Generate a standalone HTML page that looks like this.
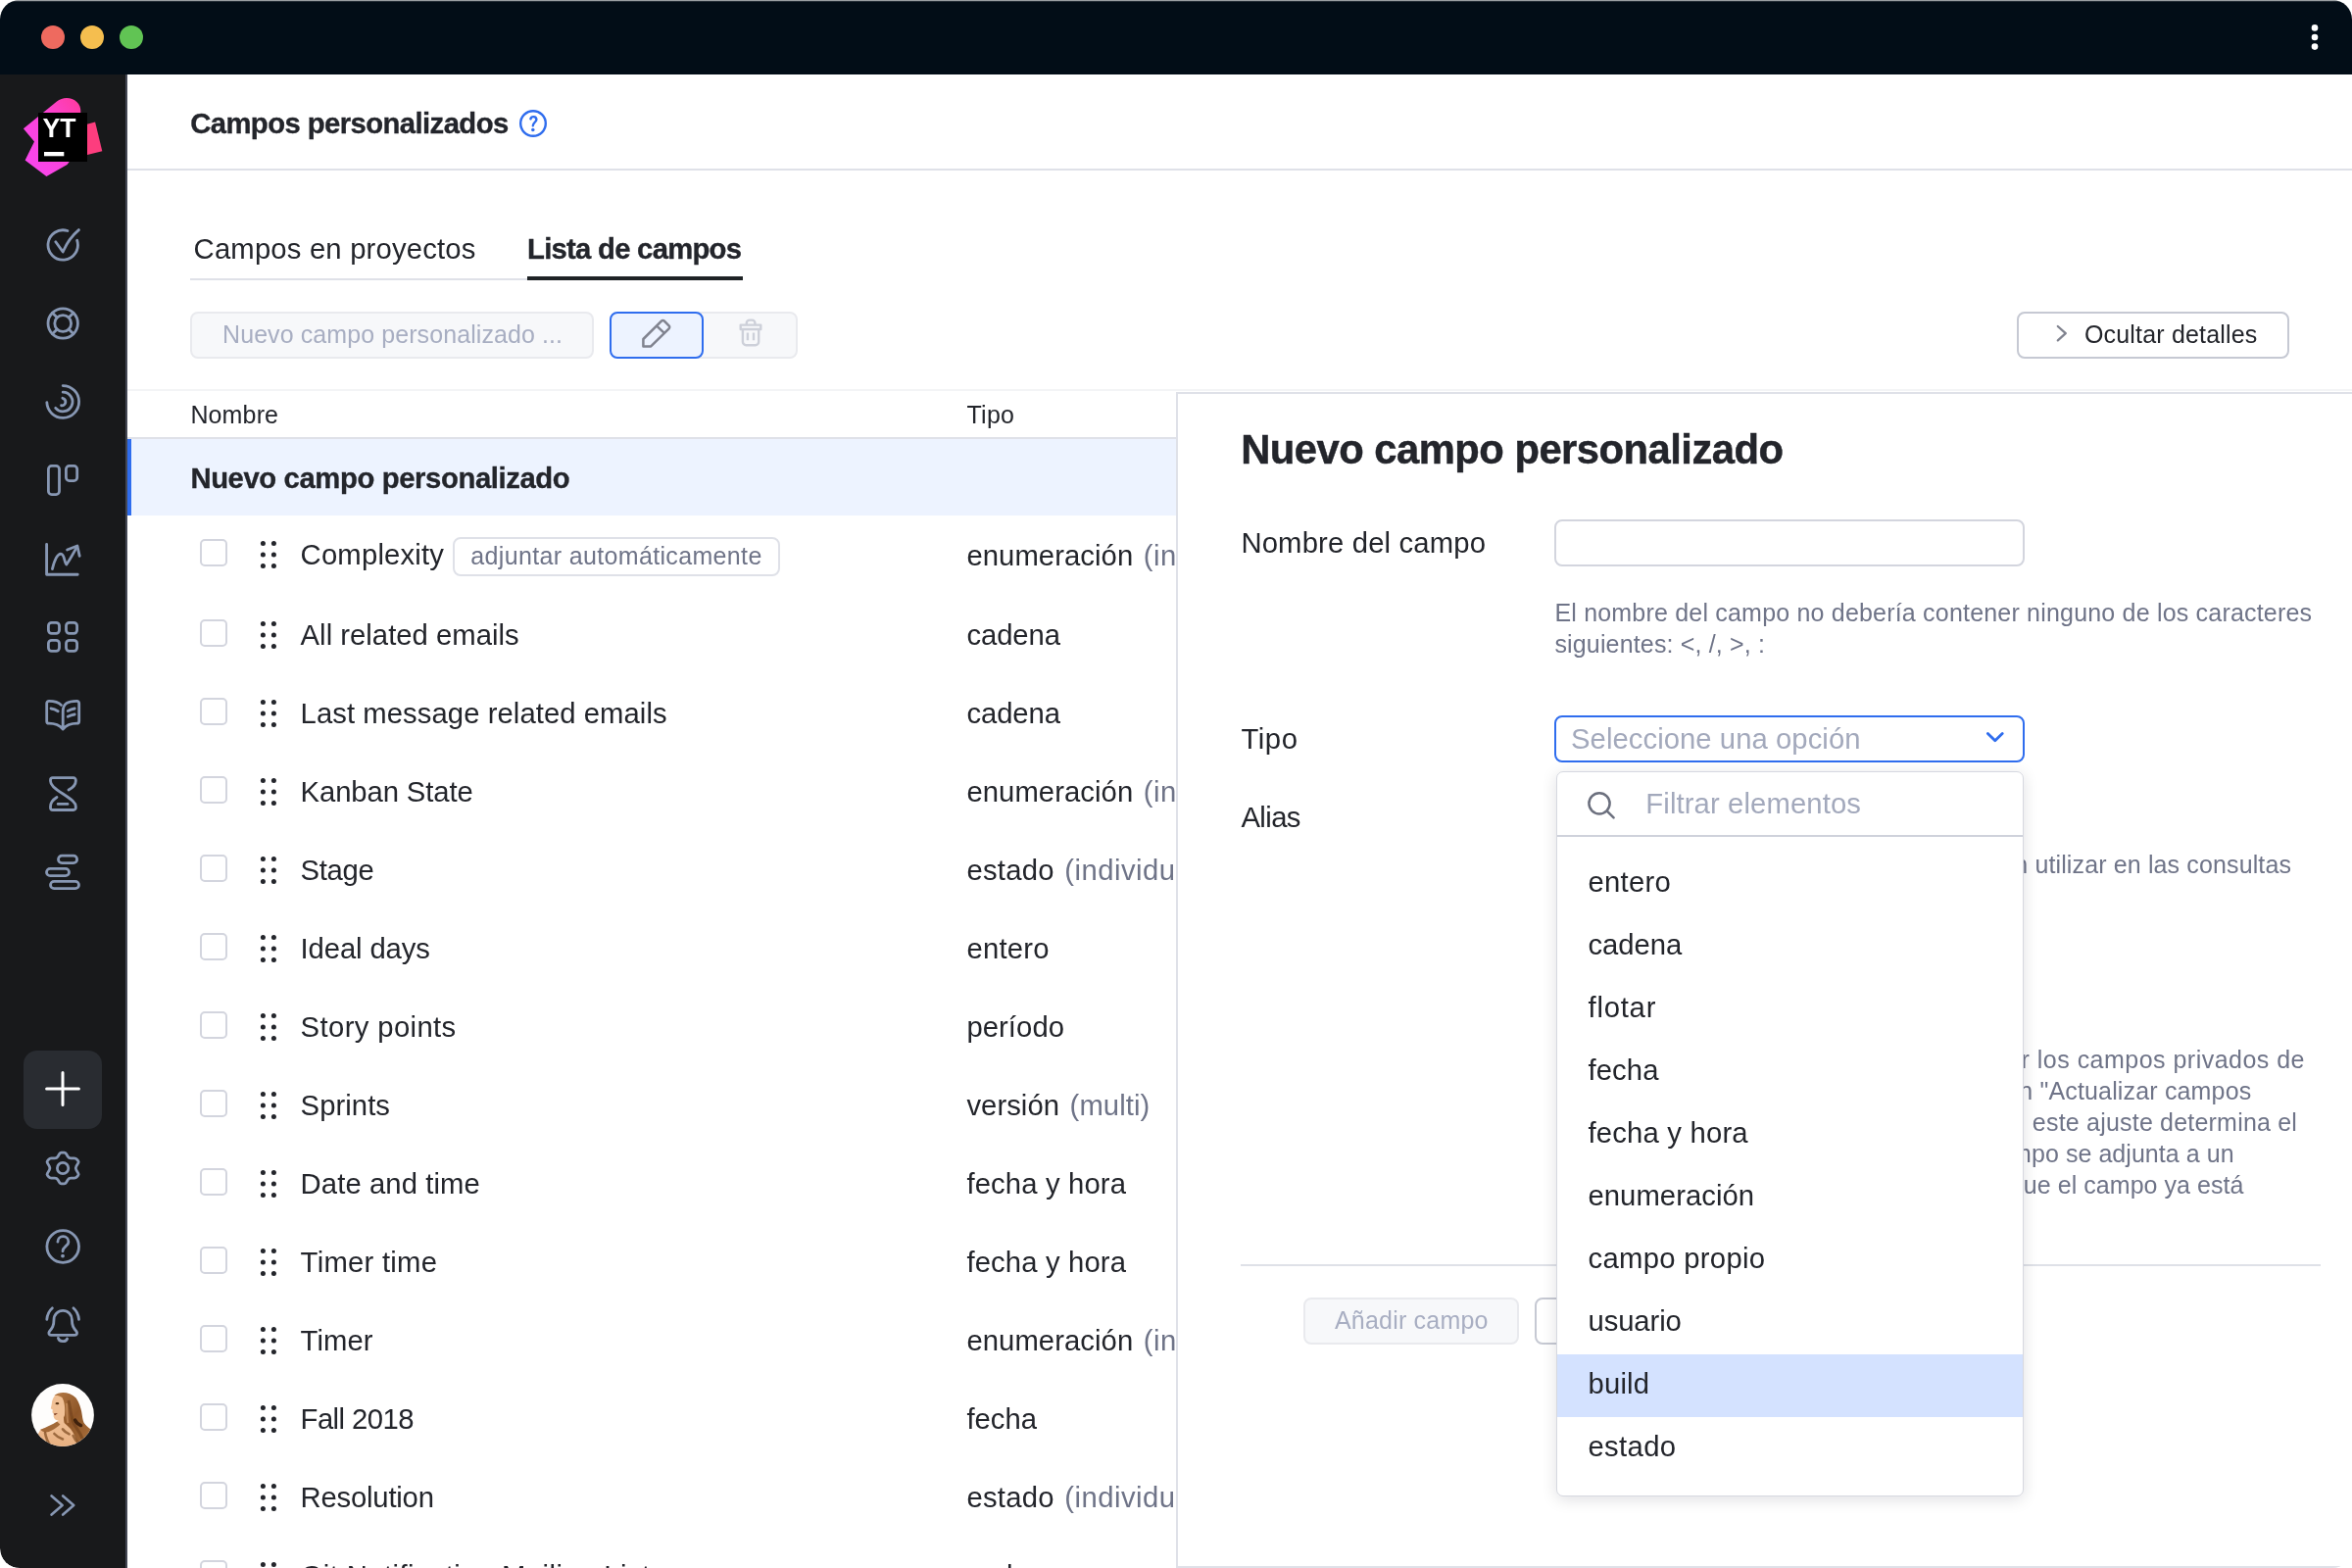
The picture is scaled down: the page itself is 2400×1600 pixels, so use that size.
<!DOCTYPE html>
<html lang="es"><head><meta charset="utf-8"><title>Campos personalizados</title>
<style>
*{box-sizing:border-box;margin:0;padding:0}
html,body{width:2400px;height:1600px;overflow:hidden;background:#fff}
body{font-family:"Liberation Sans",Arial,sans-serif;color:#23252b;position:relative}
.win{position:absolute;left:0;top:0;width:2400px;height:1600px;border-radius:20px;overflow:hidden;background:#fff;will-change:transform}
.abs,.t,.ic,.cb,.hl{position:absolute}
.t{white-space:nowrap}
.b{font-weight:700;-webkit-text-stroke:.011em currentColor}
.titlebar{left:0;top:0;width:2400px;height:76px;background:#020d17;background-image:linear-gradient(rgba(255,255,255,.6) 0,rgba(255,255,255,.6) 1px,rgba(255,255,255,.14) 1px,rgba(255,255,255,.14) 2px,rgba(255,255,255,0) 2px);background-repeat:no-repeat}
.tl{width:24px;height:24px;border-radius:50%;top:26px}
.side{left:0;top:76px;width:130px;height:1524px;background:#18191b;border-right:2px solid #444854;border-bottom-left-radius:20px}
.plus{left:24px;top:1072px;width:80px;height:80px;border-radius:14px;background:#292c31}
.hline{height:2px;background:#dfe1e8}
.cb{left:204px;width:28px;height:28px;border:2px solid #d3d5de;border-radius:5px;background:#fff}
.btn{border-radius:8px;border:2px solid #c6c9d3;background:#fff}
.dis{background:#f7f8fa;border-color:#e9eaee}
.panel{left:1200px;top:400px;width:1200px;height:1200px;background:#fff;border:2px solid #dfe1e8;border-right:0}
.clip{left:130px;top:400px;width:1070px;height:1200px;overflow:hidden}
.pop{left:1588px;top:787px;width:477px;height:740px;background:#fff;border-radius:7px;border:1px solid #d6d8e0;box-shadow:0 3px 16px rgba(0,0,30,.13);overflow:hidden}
.hl{left:0;width:476px;height:64px;background:#d4e2ff}
</style></head><body>
<div class="win">
<!-- main content -->
<main>
<div class="t b" style="left:194.2px;top:108.00px;font-size:29.25px;line-height:36px;letter-spacing:-0.572px;">Campos personalizados</div><svg class="ic" style="left:529px;top:111px" width="30" height="30" viewBox="0 0 30 30" fill="none" stroke="#2f6dee" stroke-width="2.4" stroke-linecap="round" stroke-linejoin="round"><circle cx="15" cy="15" r="12.8"/><path d="M12.4 10.4 A3.05 3.05 0 0 1 18.4 10.9 C18.4 13.5 14.8 14.1 14.8 17.3"/><circle cx="14.8" cy="21.5" r="1.75" fill="#2f6dee" stroke="none"/></svg><div class="abs hline" style="left:130px;top:172px;width:2270px"></div><div class="t" style="left:197.6px;top:236.00px;font-size:29.25px;line-height:36px;letter-spacing:0.183px;">Campos en proyectos</div><div class="t b" style="left:538.0px;top:236.00px;font-size:29.25px;line-height:36px;letter-spacing:-0.728px;">Lista de campos</div><div class="abs hline" style="left:194px;top:283.5px;width:344px"></div><div class="abs" style="left:538px;top:282px;width:220px;height:4px;background:#1f2326"></div><div class="abs btn dis" style="left:194px;top:318px;width:412px;height:48px"></div><div class="t" style="left:227.0px;top:325.00px;font-size:25px;line-height:32px;letter-spacing:0.085px;color:#a8aec2;">Nuevo campo personalizado ...</div><div class="abs btn dis" style="left:700px;top:318px;width:114px;height:48px"></div><div class="abs btn" style="left:622px;top:318px;width:96px;height:48px;border-color:#2f6dee;background:#edf3ff"></div><svg class="ic" style="left:650px;top:322px" width="40" height="40" viewBox="650 322 40 40" fill="none" stroke="#80838f" stroke-width="2.5" stroke-linejoin="round" stroke-linecap="round"><path d="M656.4 346 L674.9 327.6 A2.1 2.1 0 0 1 677.9 327.6 L682.6 332.3 A2.1 2.1 0 0 1 682.6 335.3 L664.2 353.4 H656.4 Z"/><path d="M671.2 333.6 L677.6 339.6"/></svg><svg class="ic" style="left:750px;top:322px" width="34" height="36" viewBox="750 322 34 36" fill="none" stroke="#cdd0d9" stroke-width="2.4" stroke-linejoin="round"><path d="M755.7 331.6 H776.3 V336 H755.7 Z"/><path d="M761.8 331.4 V329.6 A3 3 0 0 1 764.8 326.6 H767.4 A3 3 0 0 1 770.4 329.6 V331.4"/><path d="M757.9 336.2 V348.8 A3.4 3.4 0 0 0 761.3 352.2 H770.8 A3.4 3.4 0 0 0 774.2 348.8 V336.2"/><path d="M762.9 339.4 V347.2 M769 339.4 V347.2"/></svg><div class="abs btn" style="left:2058px;top:318px;width:278px;height:48px"></div><svg class="ic" style="left:2094px;top:328px" width="20" height="24" viewBox="2094 328 20 24" fill="none" stroke="#80838f" stroke-width="2.3" stroke-linecap="round" stroke-linejoin="round"><path d="M2099.8 333 L2107.8 340.2 L2099.8 347.4"/></svg><div class="t" style="left:2127.0px;top:325.00px;font-size:25px;line-height:32px;letter-spacing:0.174px;">Ocultar detalles</div><div class="abs" style="left:130px;top:397px;width:2270px;height:2px;background:#f3f4f6"></div><div class="t" style="left:194.4px;top:407.00px;font-size:25px;line-height:32px;letter-spacing:0.138px;">Nombre</div><div class="t" style="left:986.4px;top:407.00px;font-size:25px;line-height:32px;letter-spacing:0.299px;">Tipo</div><div class="abs hline" style="left:130px;top:445.5px;width:1070px"></div><div class="abs" style="left:130px;top:448px;width:1070px;height:78px;background:#edf3ff"></div><div class="abs" style="left:130px;top:448px;width:4px;height:78px;background:#2f6dee"></div><div class="t b" style="left:194.4px;top:470.00px;font-size:29.25px;line-height:36px;letter-spacing:-0.386px;">Nuevo campo personalizado</div><div class="abs" style="left:462px;top:548px;width:334px;height:40px;border:2px solid #dfe1e8;border-radius:8px"></div><div class="t" style="left:480.3px;top:551.00px;font-size:25px;line-height:32px;letter-spacing:0.346px;color:#6f7488;">adjuntar automáticamente</div><div class="abs clip" style="left:0;top:0;width:1200px;height:1600px"><div class="cb" style="top:550px"></div><svg class="ic" style="left:264px;top:549.7px" width="20" height="32" viewBox="0 0 20 32" fill="#23252b"><circle cx="4.4" cy="4.5" r="2.5"/><circle cx="15.4" cy="4.5" r="2.5"/><circle cx="4.4" cy="16" r="2.5"/><circle cx="15.4" cy="16" r="2.5"/><circle cx="4.4" cy="27.5" r="2.5"/><circle cx="15.4" cy="27.5" r="2.5"/></svg><div class="t" style="left:306.6px;top:548.00px;font-size:29.25px;line-height:36px;letter-spacing:0.193px;">Complexity</div><div class="t" style="left:986.4px;top:549.00px;font-size:29.25px;line-height:36px;letter-spacing:0.071px;">enumeración</div><div class="t" style="left:1166.8px;top:549.00px;font-size:29.25px;line-height:36px;letter-spacing:0.498px;color:#6f7488;">(individual)</div><div class="cb" style="top:632px"></div><svg class="ic" style="left:264px;top:631.7px" width="20" height="32" viewBox="0 0 20 32" fill="#23252b"><circle cx="4.4" cy="4.5" r="2.5"/><circle cx="15.4" cy="4.5" r="2.5"/><circle cx="4.4" cy="16" r="2.5"/><circle cx="15.4" cy="16" r="2.5"/><circle cx="4.4" cy="27.5" r="2.5"/><circle cx="15.4" cy="27.5" r="2.5"/></svg><div class="t" style="left:306.6px;top:630.00px;font-size:29.25px;line-height:36px;letter-spacing:0.017px;">All related emails</div><div class="t" style="left:986.4px;top:630.00px;font-size:29.25px;line-height:36px;letter-spacing:-0.071px;">cadena</div><div class="cb" style="top:712px"></div><svg class="ic" style="left:264px;top:711.7px" width="20" height="32" viewBox="0 0 20 32" fill="#23252b"><circle cx="4.4" cy="4.5" r="2.5"/><circle cx="15.4" cy="4.5" r="2.5"/><circle cx="4.4" cy="16" r="2.5"/><circle cx="15.4" cy="16" r="2.5"/><circle cx="4.4" cy="27.5" r="2.5"/><circle cx="15.4" cy="27.5" r="2.5"/></svg><div class="t" style="left:306.6px;top:710.00px;font-size:29.25px;line-height:36px;letter-spacing:0.066px;">Last message related emails</div><div class="t" style="left:986.4px;top:710.00px;font-size:29.25px;line-height:36px;letter-spacing:-0.071px;">cadena</div><div class="cb" style="top:792px"></div><svg class="ic" style="left:264px;top:791.7px" width="20" height="32" viewBox="0 0 20 32" fill="#23252b"><circle cx="4.4" cy="4.5" r="2.5"/><circle cx="15.4" cy="4.5" r="2.5"/><circle cx="4.4" cy="16" r="2.5"/><circle cx="15.4" cy="16" r="2.5"/><circle cx="4.4" cy="27.5" r="2.5"/><circle cx="15.4" cy="27.5" r="2.5"/></svg><div class="t" style="left:306.6px;top:790.00px;font-size:29.25px;line-height:36px;letter-spacing:-0.105px;">Kanban State</div><div class="t" style="left:986.4px;top:790.00px;font-size:29.25px;line-height:36px;letter-spacing:0.071px;">enumeración</div><div class="t" style="left:1166.8px;top:790.00px;font-size:29.25px;line-height:36px;letter-spacing:0.498px;color:#6f7488;">(individual)</div><div class="cb" style="top:872px"></div><svg class="ic" style="left:264px;top:871.7px" width="20" height="32" viewBox="0 0 20 32" fill="#23252b"><circle cx="4.4" cy="4.5" r="2.5"/><circle cx="15.4" cy="4.5" r="2.5"/><circle cx="4.4" cy="16" r="2.5"/><circle cx="15.4" cy="16" r="2.5"/><circle cx="4.4" cy="27.5" r="2.5"/><circle cx="15.4" cy="27.5" r="2.5"/></svg><div class="t" style="left:306.6px;top:870.00px;font-size:29.25px;line-height:36px;letter-spacing:-0.332px;">Stage</div><div class="t" style="left:986.4px;top:870.00px;font-size:29.25px;line-height:36px;letter-spacing:0.277px;">estado</div><div class="t" style="left:1086.2px;top:870.00px;font-size:29.25px;line-height:36px;letter-spacing:0.498px;color:#6f7488;">(individual)</div><div class="cb" style="top:952px"></div><svg class="ic" style="left:264px;top:951.7px" width="20" height="32" viewBox="0 0 20 32" fill="#23252b"><circle cx="4.4" cy="4.5" r="2.5"/><circle cx="15.4" cy="4.5" r="2.5"/><circle cx="4.4" cy="16" r="2.5"/><circle cx="15.4" cy="16" r="2.5"/><circle cx="4.4" cy="27.5" r="2.5"/><circle cx="15.4" cy="27.5" r="2.5"/></svg><div class="t" style="left:306.6px;top:950.00px;font-size:29.25px;line-height:36px;letter-spacing:-0.125px;">Ideal days</div><div class="t" style="left:986.4px;top:950.00px;font-size:29.25px;line-height:36px;letter-spacing:0.254px;">entero</div><div class="cb" style="top:1032px"></div><svg class="ic" style="left:264px;top:1031.7px" width="20" height="32" viewBox="0 0 20 32" fill="#23252b"><circle cx="4.4" cy="4.5" r="2.5"/><circle cx="15.4" cy="4.5" r="2.5"/><circle cx="4.4" cy="16" r="2.5"/><circle cx="15.4" cy="16" r="2.5"/><circle cx="4.4" cy="27.5" r="2.5"/><circle cx="15.4" cy="27.5" r="2.5"/></svg><div class="t" style="left:306.6px;top:1030.00px;font-size:29.25px;line-height:36px;letter-spacing:0.378px;">Story points</div><div class="t" style="left:986.4px;top:1030.00px;font-size:29.25px;line-height:36px;letter-spacing:0.067px;">período</div><div class="cb" style="top:1112px"></div><svg class="ic" style="left:264px;top:1111.7px" width="20" height="32" viewBox="0 0 20 32" fill="#23252b"><circle cx="4.4" cy="4.5" r="2.5"/><circle cx="15.4" cy="4.5" r="2.5"/><circle cx="4.4" cy="16" r="2.5"/><circle cx="15.4" cy="16" r="2.5"/><circle cx="4.4" cy="27.5" r="2.5"/><circle cx="15.4" cy="27.5" r="2.5"/></svg><div class="t" style="left:306.6px;top:1110.00px;font-size:29.25px;line-height:36px;letter-spacing:0.061px;">Sprints</div><div class="t" style="left:986.4px;top:1110.00px;font-size:29.25px;line-height:36px;letter-spacing:0.052px;">versión</div><div class="t" style="left:1091.6px;top:1110.00px;font-size:29.25px;line-height:36px;letter-spacing:0.060px;color:#6f7488;">(multi)</div><div class="cb" style="top:1192px"></div><svg class="ic" style="left:264px;top:1191.7px" width="20" height="32" viewBox="0 0 20 32" fill="#23252b"><circle cx="4.4" cy="4.5" r="2.5"/><circle cx="15.4" cy="4.5" r="2.5"/><circle cx="4.4" cy="16" r="2.5"/><circle cx="15.4" cy="16" r="2.5"/><circle cx="4.4" cy="27.5" r="2.5"/><circle cx="15.4" cy="27.5" r="2.5"/></svg><div class="t" style="left:306.6px;top:1190.00px;font-size:29.25px;line-height:36px;letter-spacing:0.093px;">Date and time</div><div class="t" style="left:986.4px;top:1190.00px;font-size:29.25px;line-height:36px;letter-spacing:0.149px;">fecha y hora</div><div class="cb" style="top:1272px"></div><svg class="ic" style="left:264px;top:1271.7px" width="20" height="32" viewBox="0 0 20 32" fill="#23252b"><circle cx="4.4" cy="4.5" r="2.5"/><circle cx="15.4" cy="4.5" r="2.5"/><circle cx="4.4" cy="16" r="2.5"/><circle cx="15.4" cy="16" r="2.5"/><circle cx="4.4" cy="27.5" r="2.5"/><circle cx="15.4" cy="27.5" r="2.5"/></svg><div class="t" style="left:306.6px;top:1270.00px;font-size:29.25px;line-height:36px;letter-spacing:0.262px;">Timer time</div><div class="t" style="left:986.4px;top:1270.00px;font-size:29.25px;line-height:36px;letter-spacing:0.149px;">fecha y hora</div><div class="cb" style="top:1352px"></div><svg class="ic" style="left:264px;top:1351.7px" width="20" height="32" viewBox="0 0 20 32" fill="#23252b"><circle cx="4.4" cy="4.5" r="2.5"/><circle cx="15.4" cy="4.5" r="2.5"/><circle cx="4.4" cy="16" r="2.5"/><circle cx="15.4" cy="16" r="2.5"/><circle cx="4.4" cy="27.5" r="2.5"/><circle cx="15.4" cy="27.5" r="2.5"/></svg><div class="t" style="left:306.6px;top:1350.00px;font-size:29.25px;line-height:36px;letter-spacing:0.086px;">Timer</div><div class="t" style="left:986.4px;top:1350.00px;font-size:29.25px;line-height:36px;letter-spacing:0.071px;">enumeración</div><div class="t" style="left:1166.8px;top:1350.00px;font-size:29.25px;line-height:36px;letter-spacing:0.498px;color:#6f7488;">(individual)</div><div class="cb" style="top:1432px"></div><svg class="ic" style="left:264px;top:1431.7px" width="20" height="32" viewBox="0 0 20 32" fill="#23252b"><circle cx="4.4" cy="4.5" r="2.5"/><circle cx="15.4" cy="4.5" r="2.5"/><circle cx="4.4" cy="16" r="2.5"/><circle cx="15.4" cy="16" r="2.5"/><circle cx="4.4" cy="27.5" r="2.5"/><circle cx="15.4" cy="27.5" r="2.5"/></svg><div class="t" style="left:306.6px;top:1430.00px;font-size:29.25px;line-height:36px;letter-spacing:-0.565px;">Fall 2018</div><div class="t" style="left:986.4px;top:1430.00px;font-size:29.25px;line-height:36px;letter-spacing:0.013px;">fecha</div><div class="cb" style="top:1512px"></div><svg class="ic" style="left:264px;top:1511.7px" width="20" height="32" viewBox="0 0 20 32" fill="#23252b"><circle cx="4.4" cy="4.5" r="2.5"/><circle cx="15.4" cy="4.5" r="2.5"/><circle cx="4.4" cy="16" r="2.5"/><circle cx="15.4" cy="16" r="2.5"/><circle cx="4.4" cy="27.5" r="2.5"/><circle cx="15.4" cy="27.5" r="2.5"/></svg><div class="t" style="left:306.6px;top:1510.00px;font-size:29.25px;line-height:36px;letter-spacing:-0.211px;">Resolution</div><div class="t" style="left:986.4px;top:1510.00px;font-size:29.25px;line-height:36px;letter-spacing:0.277px;">estado</div><div class="t" style="left:1086.2px;top:1510.00px;font-size:29.25px;line-height:36px;letter-spacing:0.498px;color:#6f7488;">(individual)</div><div class="cb" style="top:1592px"></div><svg class="ic" style="left:264px;top:1591.7px" width="20" height="32" viewBox="0 0 20 32" fill="#23252b"><circle cx="4.4" cy="4.5" r="2.5"/><circle cx="15.4" cy="4.5" r="2.5"/><circle cx="4.4" cy="16" r="2.5"/><circle cx="15.4" cy="16" r="2.5"/><circle cx="4.4" cy="27.5" r="2.5"/><circle cx="15.4" cy="27.5" r="2.5"/></svg><div class="t" style="left:306.6px;top:1590.00px;font-size:29.25px;line-height:36px;letter-spacing:0.421px;">Git Notification Mailing List</div><div class="t" style="left:986.4px;top:1590.00px;font-size:29.25px;line-height:36px;letter-spacing:-0.071px;">cadena</div></div><section><div class="abs panel"></div><div class="t b" style="left:1266.2px;top:433.00px;font-size:41.75px;line-height:51px;letter-spacing:-0.511px;">Nuevo campo personalizado</div><div class="t" style="left:1266.4px;top:536.00px;font-size:29.25px;line-height:36px;letter-spacing:0.167px;">Nombre del campo</div><div class="abs btn" style="left:1586px;top:530px;width:480px;height:48px;border-color:#d3d5de"></div><div class="t" style="left:1586.4px;top:609.00px;font-size:25px;line-height:32px;letter-spacing:0.195px;color:#6f7488;">El nombre del campo no debería contener ninguno de los caracteres</div><div class="t" style="left:1586.4px;top:641.00px;font-size:25px;line-height:32px;letter-spacing:0.161px;color:#6f7488;">siguientes: &lt;, /, &gt;, :</div><div class="t" style="left:1266.4px;top:736.00px;font-size:29.25px;line-height:36px;letter-spacing:0.596px;">Tipo</div><div class="abs btn" style="left:1586px;top:730px;width:480px;height:48px;border-color:#2f6dee"></div><div class="t" style="left:1603.0px;top:736.00px;font-size:29.25px;line-height:36px;letter-spacing:0.059px;color:#a3a9bc;">Seleccione una opción</div><svg class="ic" style="left:2022px;top:742px" width="28" height="20" viewBox="2022 742 28 20" fill="none" stroke="#2f6dee" stroke-width="2.8" stroke-linecap="round" stroke-linejoin="round"><path d="M2028.4 748.4 L2035.8 755.8 L2043.2 748.4"/></svg><div class="t" style="left:1266.4px;top:816.00px;font-size:29.25px;line-height:36px;letter-spacing:-0.575px;">Alias</div><div class="t" style="right:61.9px;top:866.00px;font-size:25px;line-height:32px;letter-spacing:0.130px;color:#6f7488;">Lista de alias que se pueden utilizar en las consultas</div><div class="t" style="right:48.0px;top:1065.00px;font-size:25px;line-height:32px;letter-spacing:0.480px;color:#6f7488;">Solo los usuarios que pueden leer los campos privados de</div><div class="t" style="right:102.6px;top:1097.00px;font-size:25px;line-height:32px;letter-spacing:0.160px;color:#6f7488;">incidencias pueden ver el campo en "Actualizar campos</div><div class="t" style="right:55.9px;top:1129.00px;font-size:25px;line-height:32px;letter-spacing:0.200px;color:#6f7488;">privados de incidencias". Además, este ajuste determina el</div><div class="t" style="right:120.4px;top:1161.00px;font-size:25px;line-height:32px;letter-spacing:0.050px;color:#6f7488;">comportamiento cuando el campo se adjunta a un</div><div class="t" style="right:110.5px;top:1193.00px;font-size:25px;line-height:32px;letter-spacing:0.050px;color:#6f7488;">proyecto. Tenga en cuenta que el campo ya está</div><div class="abs hline" style="left:1266px;top:1289.8px;width:1102px"></div><div class="abs btn dis" style="left:1330.4px;top:1324.2px;width:219.2px;height:47.4px"></div><div class="t" style="left:1362.0px;top:1331.00px;font-size:25px;line-height:32px;letter-spacing:0.197px;color:#a8aec2;">Añadir campo</div><div class="abs btn" style="left:1566px;top:1324.2px;width:150px;height:47.4px"></div><div class="t" style="left:1598.0px;top:1331.00px;font-size:25px;line-height:32px;letter-spacing:-2.006px;">Cancelar</div><div class="abs pop"><svg class="ic" style="left:28px;top:18px" width="32" height="32" viewBox="1617 806 32 32" fill="none" stroke="#6c707e" stroke-width="2.5" stroke-linecap="round"><circle cx="1632" cy="819.8" r="10.6"/><path d="M1639.8 827.6 L1646.6 834.4"/></svg><div class="t" style="left:90.3px;top:14.00px;font-size:29.25px;line-height:36px;letter-spacing:0.112px;color:#a3a9bc;">Filtrar elementos</div><div class="abs" style="left:0;top:64px;width:476px;height:2px;background:#cfd2db"></div><div class="t" style="left:31.5px;top:94.00px;font-size:29.25px;line-height:36px;letter-spacing:0.254px;">entero</div><div class="t" style="left:31.5px;top:158.00px;font-size:29.25px;line-height:36px;letter-spacing:-0.051px;">cadena</div><div class="t" style="left:31.5px;top:222.00px;font-size:29.25px;line-height:36px;letter-spacing:0.775px;">flotar</div><div class="t" style="left:31.5px;top:286.00px;font-size:29.25px;line-height:36px;letter-spacing:0.113px;">fecha</div><div class="t" style="left:31.5px;top:350.00px;font-size:29.25px;line-height:36px;letter-spacing:0.194px;">fecha y hora</div><div class="t" style="left:31.5px;top:414.00px;font-size:29.25px;line-height:36px;letter-spacing:0.041px;">enumeración</div><div class="t" style="left:31.5px;top:478.00px;font-size:29.25px;line-height:36px;letter-spacing:0.298px;">campo propio</div><div class="t" style="left:31.5px;top:542.00px;font-size:29.25px;line-height:36px;letter-spacing:-0.105px;">usuario</div><div class="hl" style="top:594px"></div><div class="t" style="left:31.5px;top:606.00px;font-size:29.25px;line-height:36px;letter-spacing:0.176px;">build</div><div class="t" style="left:31.5px;top:670.00px;font-size:29.25px;line-height:36px;letter-spacing:0.338px;">estado</div></div></section></main><header class="abs titlebar"><div class="abs tl" style="left:42px;background:#ee6a5f"></div><div class="abs tl" style="left:82px;background:#f5be4f"></div><div class="abs tl" style="left:122px;background:#61c454"></div><svg class="ic" style="left:2356px;top:22px" width="12" height="32" viewBox="0 0 12 32" fill="#fff"><circle cx="6" cy="6.4" r="3.3"/><circle cx="6" cy="16" r="3.3"/><circle cx="6" cy="25.6" r="3.3"/></svg></header><nav class="abs side"></nav><svg class="ic" style="left:20px;top:96px" width="90" height="90" viewBox="20 96 90 90">
<defs><linearGradient id="lg1" x1="0" y1="1" x2="1" y2="0"><stop offset="0" stop-color="#f846f3"/><stop offset=".6" stop-color="#fb43d6"/><stop offset="1" stop-color="#ff3a9b"/></linearGradient></defs>
<path d="M23.9 131.2 L58 103.5 C64 98.6 73 98.8 78.6 104.2 C81.2 106.8 82.4 110 82.3 113.6 L82 150 L68.5 168 L47.4 180 L25.6 163.5 L35 144.6 Z" fill="url(#lg1)"/>
<path d="M86 127.6 L97.1 124.4 L104.3 154.2 L86 158.8 Z" fill="#fd3d7e"/>
<rect x="39" y="115" width="50" height="50" fill="#000"/>
<rect x="45" y="155" width="20.3" height="4.3" fill="#fff"/>
<text x="43.6" y="139.8" font-family="Liberation Sans, Arial, sans-serif" font-weight="700" font-size="27" fill="#fff" textLength="34" lengthAdjust="spacingAndGlyphs">YT</text>
</svg><svg class="ic" style="left:47px;top:233px;overflow:visible" width="34" height="34" viewBox="0 0 34 34" fill="none" stroke="#8797b3" stroke-width="2.8" stroke-linecap="round" stroke-linejoin="round"><path d="M31.66 12.30 A15.2 15.2 0 1 1 21.90 2.54"/><path d="M9.8 13.8 L17.2 24 C21 15 27 7 33.4 1.6"/></svg><svg class="ic" style="left:47px;top:313px;overflow:visible" width="34" height="34" viewBox="0 0 34 34" fill="none" stroke="#8797b3" stroke-width="2.8" stroke-linecap="round" stroke-linejoin="round"><circle cx="17.2" cy="17" r="15.2"/><circle cx="17.2" cy="17" r="8.4"/><path d="M11.26 11.06 L6.45 6.25"/><path d="M11.26 22.94 L6.45 27.75"/><path d="M23.14 11.06 L27.95 6.25"/><path d="M23.14 22.94 L27.95 27.75"/></svg><svg class="ic" style="left:47px;top:392.5px;overflow:visible" width="34" height="34" viewBox="0 0 34 34" fill="none" stroke="#8797b3" stroke-width="2.8" stroke-linecap="round" stroke-linejoin="round"><path d="M17.20 0.60 A16.4 16.4 0 1 1 0.81 17.57"/><path d="M17.20 7.20 A9.8 9.8 0 1 1 9.69 23.30"/><path d="M16.86 13.26 A3.8 3.8 0 0 1 15.54 20.74"/></svg><svg class="ic" style="left:47px;top:473px;overflow:visible" width="34" height="34" viewBox="0 0 34 34" fill="none" stroke="#8797b3" stroke-width="2.8" stroke-linecap="round" stroke-linejoin="round"><rect x="2.4" y="2.4" width="11.1" height="29.2" rx="3.3"/><rect x="20.4" y="2.4" width="11.3" height="15.2" rx="3.3"/></svg><svg class="ic" style="left:47px;top:557.2px;overflow:visible" width="34" height="34" viewBox="0 0 34 34" fill="none" stroke="#8797b3" stroke-width="2.8" stroke-linecap="round" stroke-linejoin="round"><path d="M0.6 -1.6 V29.2 H32.2" stroke-width="2.9"/><path d="M6.4 23.6 C9 13 12 8.4 15 8.2 C19 8.2 18.4 17 20.7 19 C24 15 28 7 31.8 0.6"/><path d="M21.6 4 L31.9 0 L34.2 10.4"/></svg><svg class="ic" style="left:47px;top:633px;overflow:visible" width="34" height="34" viewBox="0 0 34 34" fill="none" stroke="#8797b3" stroke-width="2.8" stroke-linecap="round" stroke-linejoin="round"><rect x="2.4" y="2.3" width="11.1" height="11.1" rx="3.3"/><rect x="2.4" y="20.3" width="11.1" height="11.1" rx="3.3"/><rect x="20.5" y="2.3" width="11.1" height="11.1" rx="3.3"/><rect x="20.5" y="20.3" width="11.1" height="11.1" rx="3.3"/></svg><svg class="ic" style="left:47px;top:713px;overflow:visible" width="34" height="34" viewBox="0 0 34 34" fill="none" stroke="#8797b3" stroke-width="2.8" stroke-linecap="round" stroke-linejoin="round"><path d="M17.2 31 C13 26.2 9 25.2 3 25.2 A2.3 2.3 0 0 1 0.7 22.9 V4.7 A2.3 2.3 0 0 1 3 2.4 C8 2.4 12.5 3.4 15.4 6.4 M17.2 31 C21.4 26.2 25.4 25.2 31.4 25.2 A2.3 2.3 0 0 0 33.7 22.9 V4.7 A2.3 2.3 0 0 0 31.4 2.4 C22 2.4 17.2 5 17.2 13 V30"/><path d="M5 10 C7.4 10.3 10 11.3 12.2 12.7 M22.2 12.4 C24.4 11.3 27 10.4 29.2 10 M22.2 18.2 C24.4 17.2 27 16.4 29.2 16"/></svg><svg class="ic" style="left:47px;top:793px;overflow:visible" width="34" height="34" viewBox="0 0 34 34" fill="none" stroke="#8797b3" stroke-width="2.8" stroke-linecap="round" stroke-linejoin="round"><path d="M23 13 C27.6 10.6 30.3 8 30.3 4 V3 A2.3 2.3 0 0 0 28 0.7 H6.8 A2.3 2.3 0 0 0 4.5 3 V4 C4.5 8 8 11 17.2 17 C26.4 23 30.3 26 30.3 30 V31.2 A2.3 2.3 0 0 1 28 33.5 H6.8 A2.3 2.3 0 0 1 4.5 31.2 V30 C4.5 26 7 23 11 20.5"/><path d="M12.2 27.4 H22"/></svg><svg class="ic" style="left:47px;top:873px;overflow:visible" width="34" height="34" viewBox="0 0 34 34" fill="none" stroke="#8797b3" stroke-width="2.8" stroke-linecap="round" stroke-linejoin="round"><rect x="12.5" y="0.2" width="19.1" height="7.4" rx="3.7"/><rect x="0.5" y="13.3" width="23" height="7.4" rx="3.7"/><rect x="4.5" y="26.3" width="29" height="7.4" rx="3.7"/></svg><div class="abs plus"></div><svg class="ic" style="left:46px;top:1093px" width="36" height="36" viewBox="0 0 36 36" fill="none" stroke="#fff" stroke-width="3" stroke-linecap="round"><path d="M18 1.6 V34.4 M1.6 18 H34.4"/></svg><svg class="ic" style="left:47px;top:1175px;overflow:visible" width="34" height="34" viewBox="0 0 34 34" fill="none" stroke="#8797b3" stroke-width="2.8" stroke-linecap="round" stroke-linejoin="round"><path d="M18.60 1.20 Q19.80 1.20 20.43 2.22 L22.25 5.20 Q23.30 6.90 25.30 6.90 L28.90 6.90 Q30.50 6.90 31.51 8.14 L32.74 9.67 Q33.50 10.60 32.89 11.63 L30.82 15.11 Q29.70 17.00 30.82 18.89 L32.89 22.37 Q33.50 23.40 32.74 24.33 L31.51 25.86 Q30.50 27.10 28.90 27.10 L25.30 27.10 Q23.30 27.10 22.25 28.80 L20.43 31.78 Q19.80 32.80 18.60 32.80 L15.60 32.80 Q14.40 32.80 13.77 31.78 L11.95 28.80 Q10.90 27.10 8.90 27.10 L5.30 27.10 Q3.70 27.10 2.69 25.86 L1.46 24.33 Q0.70 23.40 1.31 22.37 L3.38 18.89 Q4.50 17.00 3.38 15.11 L1.31 11.63 Q0.70 10.60 1.46 9.67 L2.69 8.14 Q3.70 6.90 5.30 6.90 L8.90 6.90 Q10.90 6.90 11.95 5.20 L13.77 2.22 Q14.40 1.20 15.60 1.20 Z"/><circle cx="17.1" cy="17" r="5.7"/></svg><svg class="ic" style="left:47px;top:1255px;overflow:visible" width="34" height="34" viewBox="0 0 34 34" fill="none" stroke="#8797b3" stroke-width="2.8" stroke-linecap="round" stroke-linejoin="round"><circle cx="17.2" cy="17" r="16.3"/><path d="M11.9 12.2 A5.5 5.5 0 0 1 22.9 12.2 C22.9 16.4 17 17 17 21.8"/><circle cx="17" cy="26.6" r="1.9" fill="#8797b3" stroke="none"/></svg><svg class="ic" style="left:47px;top:1335px;overflow:visible" width="34" height="34" viewBox="0 0 34 34" fill="none" stroke="#8797b3" stroke-width="2.8" stroke-linecap="round" stroke-linejoin="round"><path d="M8 11.6 A9.2 9.2 0 0 1 26.4 11.6 C26.4 18 28 20 31 23.6 C32.2 25.4 31.4 27.3 29.4 27.3 H5 C3 27.3 2.2 25.4 3.4 23.6 C6.4 20 8 18 8 11.6Z"/><path d="M12.4 30.4 C13.4 34.6 20.4 34.8 21.6 31"/><path d="M6.4 -0.2 C3.2 2.6 1.2 6.6 0.8 11.4 M27.9 -0.2 C31.1 2.6 33.1 6.6 33.5 11.4"/></svg><svg class="ic" style="left:51px;top:1524px" width="27" height="24" viewBox="0 0 27 24" fill="none" stroke="#8797b3" stroke-width="2.6" stroke-linecap="round" stroke-linejoin="round"><path d="M1.6 2.4 L12.6 12 L1.6 21.6 M13.2 2.4 L24.2 12 L13.2 21.6"/></svg><svg class="ic" style="left:32px;top:1412px" width="64" height="64" viewBox="0 0 64 64">
<defs><clipPath id="av"><circle cx="32" cy="32" r="31.9"/></clipPath>
<linearGradient id="hair" x1="0" y1="0" x2="1" y2="1"><stop offset="0" stop-color="#b47a45"/><stop offset=".5" stop-color="#8e5628"/><stop offset="1" stop-color="#a9703c"/></linearGradient>
<linearGradient id="skin" x1="0" y1="0" x2="0" y2="1"><stop offset="0" stop-color="#f1c39a"/><stop offset="1" stop-color="#e8b081"/></linearGradient></defs>
<filter id="bl" x="-10%" y="-10%" width="120%" height="120%"><feGaussianBlur stdDeviation="0.55"/></filter><g clip-path="url(#av)"><rect width="64" height="64" fill="#fefdfc"/><g filter="url(#bl)">
<path d="M9.3 46.8 C16 44.5 22 42 26 39 L34 30 L53 40 L60.5 46.5 L64 64 L0 64 Z" fill="url(#skin)"/>
<path d="M23.5 12 C28 7.6 38.5 7.4 45.6 14.4 C49 19.5 50.4 24.5 51.2 28.4 C52 33 52.4 37 53.6 39.8 C56 43 58 45.2 60.6 46.6 C58.5 53 53 59 47 63 C46 57 44 51 40 46 C38 44 36 42 33.6 40 C32.6 36 33 28 32.6 22 C32.2 17.6 30 14 23.5 12Z" fill="url(#hair)"/>
<path d="M24 12 C22 14.5 21 17.6 20.8 20.6 L19.8 25.2 L21.8 26.6 L21.4 29.2 L22.8 30.4 L22.6 33.2 C23.2 36 24.6 37.2 27 37.4 C30 37.4 32.6 36 34 32 C34.6 26 34.2 19 31.4 14 C29.4 12.4 26.4 11.8 24 12Z" fill="#f0c095"/>
<path d="M26.2 38.6 C22 41.5 15 44.6 9.3 46.8 C12 50 16 50.4 21 47.6 C24 46 27 44 29.4 41.6Z" fill="#9a6030" opacity=".9"/>
<path d="M38 17 C40 25 40 34 44 42 C47 47 50 50 52 56" stroke="#6a3c18" stroke-width="3" fill="none" opacity=".55"/>
<path d="M44.6 37 C46 40 48 41.6 50.6 42.6" stroke="#2a1406" stroke-width="3.4" fill="none" opacity=".8" stroke-linecap="round"/>
<path d="M32 46.4 C34 49 36 50.4 38.6 51.4 M23.4 51 C26 54 29 55.6 32 56.4 M42.6 53 C44 56 45.4 58 47.4 60 M14 50 C15 56 17 60 20 64" stroke="#7c4a20" stroke-width="2.6" fill="none" opacity=".7" stroke-linecap="round"/>
<path d="M36 20 C36.5 27 36 34 37.4 40" stroke="#c99260" stroke-width="2" fill="none" opacity=".7"/>
<ellipse cx="26.4" cy="20.2" rx="1.9" ry="1.1" fill="#5a3414"/><path d="M22.6 30.4 L27 30 L24 32.2Z" fill="#7a3a20"/>
</g></g></svg></div></body></html>
